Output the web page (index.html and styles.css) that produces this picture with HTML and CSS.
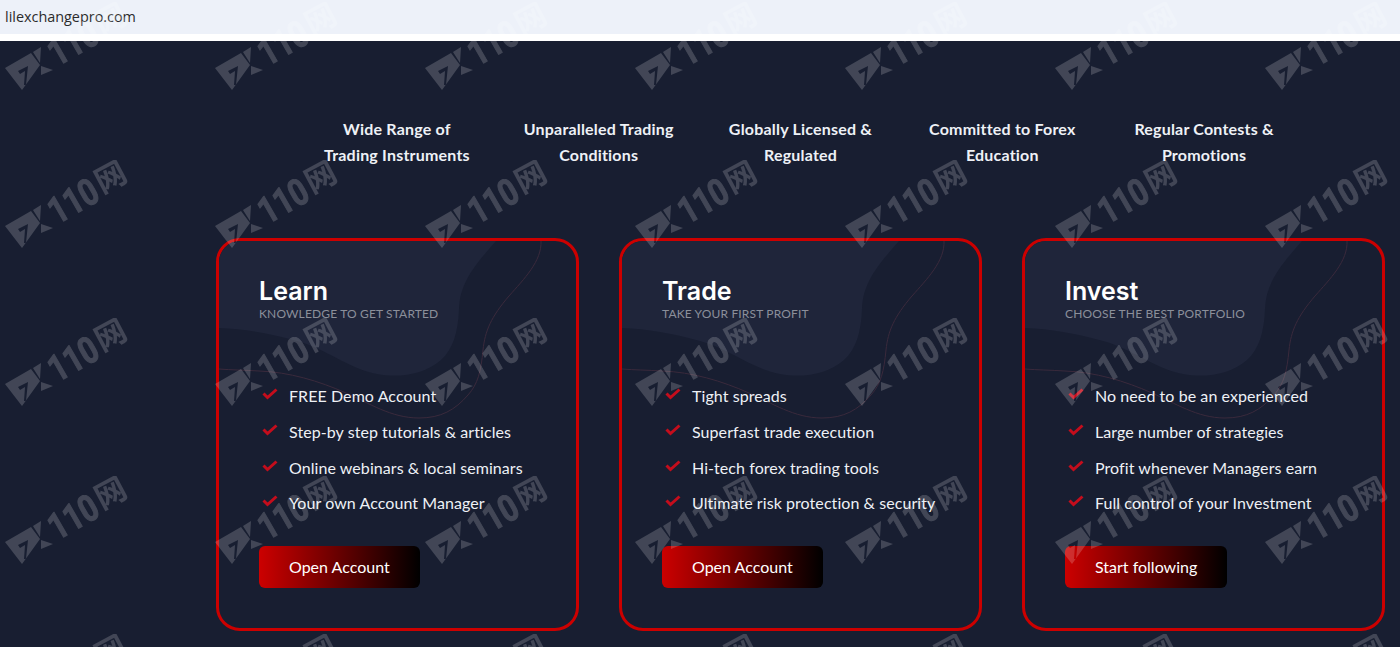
FILE: index.html
```html
<!doctype html>
<html lang="en">
<head>
    <meta charset="UTF-8">
    <title>lilexchangepro.com</title>
    <link rel="stylesheet" href="styles.css">
</head>
<body>
    <div class="urlbar">lilexchangepro.com</div>
    <main class="page">
        <section class="features">
            <div class="feature">Wide Range of<br>Trading Instruments</div>
            <div class="feature">Unparalleled Trading<br>Conditions</div>
            <div class="feature">Globally Licensed &amp;<br>Regulated</div>
            <div class="feature">Committed to Forex<br>Education</div>
            <div class="feature">Regular Contests &amp;<br>Promotions</div>
        </section>

        <svg class="defs" width="0" height="0">
            <symbol id="check" viewBox="0 0 16 12">
                <path d="M1.5 5.5 L5.5 9.5 L14.5 1.5" fill="none" stroke="#c40d1c" stroke-width="3"></path>
            </symbol>
            <symbol id="card-bg" viewBox="0 0 357 387">
                <path class="blob" d="M0 0 H277 C258 22 241 40 240 68 C239 92 234 108 222 119 C205 134 180 137 158 133 C128 127 108 108 78 100 C50 92 25 88 0 87 Z"></path>
                <path class="wave" d="M322 0 C323 20 305 38 290 55 C272 76 266 90 264 109 C262 130 259 143 249 154 C236 169 222 177 200 177 C172 177 150 162 127 152 C100 140 70 131 40 130 C25 129 12 129 0 128"></path>
            </symbol>
        </svg>

        <section class="cards">
            <article class="card">
                <svg class="card-bg"><use href="#card-bg"></use></svg>
                <h2 class="card-title">Learn</h2>
                <p class="card-sub">Knowledge to get started</p>
                <ul class="ticks">
                    <li><svg class="tick"><use href="#check"></use></svg>FREE Demo Account</li>
                    <li><svg class="tick"><use href="#check"></use></svg>Step-by step tutorials &amp; articles</li>
                    <li><svg class="tick"><use href="#check"></use></svg>Online webinars &amp; local seminars</li>
                    <li><svg class="tick"><use href="#check"></use></svg>Your own Account Manager</li>
                </ul>
                <a class="btn" href="#">Open Account</a>
            </article>
            <article class="card">
                <svg class="card-bg"><use href="#card-bg"></use></svg>
                <h2 class="card-title">Trade</h2>
                <p class="card-sub">Take your first profit</p>
                <ul class="ticks">
                    <li><svg class="tick"><use href="#check"></use></svg>Tight spreads</li>
                    <li><svg class="tick"><use href="#check"></use></svg>Superfast trade execution</li>
                    <li><svg class="tick"><use href="#check"></use></svg>Hi-tech forex trading tools</li>
                    <li><svg class="tick"><use href="#check"></use></svg>Ultimate risk protection &amp; security</li>
                </ul>
                <a class="btn" href="#">Open Account</a>
            </article>
            <article class="card">
                <svg class="card-bg"><use href="#card-bg"></use></svg>
                <h2 class="card-title">Invest</h2>
                <p class="card-sub">Choose the best portfolio</p>
                <ul class="ticks">
                    <li><svg class="tick"><use href="#check"></use></svg>No need to be an experienced</li>
                    <li><svg class="tick"><use href="#check"></use></svg>Large number of strategies</li>
                    <li><svg class="tick"><use href="#check"></use></svg>Profit whenever Managers earn</li>
                    <li><svg class="tick"><use href="#check"></use></svg>Full control of your Investment</li>
                </ul>
                <a class="btn" href="#">Start following</a>
            </article>
        </section>
    </main>

    <!-- watermark laid over the whole screenshot -->
    <svg class="watermark" width="1400" height="647">
        <defs>
            <pattern id="wm" x="0" y="2" width="210" height="158" patternUnits="userSpaceOnUse">
                <path fill-rule="evenodd" d="M5 66 L31 51 L40 63 L22 88 Z M18 69 L28 64 L26 83 L24 83 L25 69 L20 72 Z"></path>
                <path d="M33 50 L41 45 L40 61 Z M41 64 L53 68 L41 73 Z"></path>
                <text class="wm-num" x="57" y="65" textLength="52" lengthAdjust="spacingAndGlyphs" transform="rotate(-30 57 65)">110</text>
                <text class="wm-cn" text-anchor="middle" transform="translate(111 18) rotate(-28) translate(0 10)">网</text>
            </pattern>
        </defs>
        <rect class="wm-fill" width="1400" height="647"></rect>
    </svg>
</body>
</html>
```

FILE: styles.css
```css
* {
    box-sizing: border-box;
}

html, body {
    margin: 0;
    height: 647px;
    overflow: hidden;
}

body {
    position: relative;
    background: #181e31;
    font-family: "Lato", "Liberation Sans", sans-serif;
    color: #eef1f6;
}

.urlbar {
    height: 41px;
    padding: 8px 0 0 5px;
    background: #edf1f9;
    border-bottom: 7px solid #fff;
    font-family: "Open Sans", "Liberation Sans", sans-serif;
    font-size: 14.4px;
    line-height: 18px;
    color: #2b2b2b;
}

.page {
    padding: 75px 15px 0 216px;
}

.features {
    display: grid;
    grid-template-columns: repeat(5, 201.8px);
    margin-left: 80px;
}

.feature {
    font-size: 16px;
    font-weight: 700;
    line-height: 26px;
    letter-spacing: .2px;
    text-align: center;
}

.defs {
    position: absolute;
}

.cards {
    display: flex;
    gap: 40px;
    margin-top: 70px;
}

.card {
    position: relative;
    width: 363px;
    height: 393px;
    padding: 35px 40px 0;
    border: 3px solid #c00;
    border-radius: 24px;
    overflow: hidden;
}

.card-bg {
    position: absolute;
    left: 0;
    top: 0;
    width: 357px;
    height: 387px;
}

.blob {
    fill: #1f253a;
}

.wave {
    fill: none;
    stroke: #3a2a3c;
    stroke-width: 1;
}

.card-title {
    position: relative;
    margin: 0;
    font-family: "Inter", "Liberation Sans", sans-serif;
    font-size: 25px;
    font-weight: 600;
    line-height: 30px;
    color: #fff;
}

.card-sub {
    position: relative;
    margin: 0;
    font-size: 12px;
    line-height: 16px;
    letter-spacing: .15px;
    text-transform: uppercase;
    color: #8b8f9a;
}

.ticks {
    position: relative;
    list-style: none;
    margin: 56px 0 0;
    padding: 0;
}

.ticks li {
    display: flex;
    height: 35.7px;
    align-items: center;
    font-size: 16px;
    letter-spacing: .07px;
    white-space: nowrap;
}

.tick {
    width: 16px;
    height: 12px;
    margin: -3px 11px 0 3px;
}

.btn {
    position: relative;
    display: inline-block;
    height: 42px;
    margin-top: 25px;
    padding: 0 30px;
    border-radius: 6px;
    background: linear-gradient(90deg, #c00 0%, #000 100%);
    font-size: 16px;
    line-height: 42px;
    color: #fff;
    text-decoration: none;
}

.watermark {
    position: absolute;
    left: 0;
    top: 0;
    pointer-events: none;
}

.watermark path,
.watermark text {
    fill: #fff;
}

.wm-num {
    font-family: "Roboto", "Liberation Sans", sans-serif;
    font-size: 37px;
    font-weight: 700;
    stroke: #fff;
    stroke-width: 1px;
}

.wm-cn {
    font-family: "Noto Sans CJK SC", sans-serif;
    font-size: 31px;
    font-weight: 700;
}

.wm-fill {
    fill: url(#wm);
    opacity: .18;
}
```
